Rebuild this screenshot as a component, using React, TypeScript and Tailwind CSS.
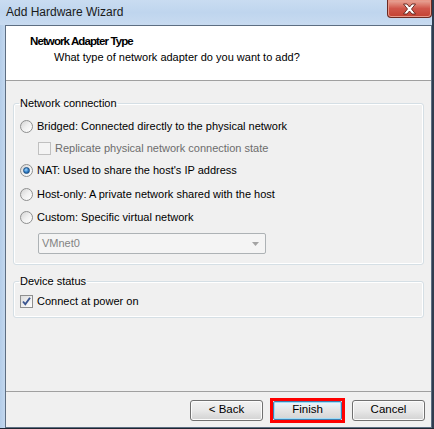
import React from "react";

const font = { fontFamily: '"Liberation Sans", Arial, sans-serif' };

function Radio({ checked }: { checked?: boolean }) {
  return (
    <span className="relative flex h-[13px] w-[13px] shrink-0 items-center justify-center rounded-full border border-[#8e8f8f] bg-gradient-to-br from-[#d4d4d4] via-[#f0f0f0] to-[#ffffff]">
      {checked && (
        <span className="h-[7px] w-[7px] rounded-full border border-[#1b4f84] bg-[radial-gradient(circle_at_40%_35%,#9fd6ff,#2c7bc4_55%,#1a4a85)]" />
      )}
    </span>
  );
}

function Check({ checked, disabled }: { checked?: boolean; disabled?: boolean }) {
  return (
    <span
      className={
        disabled
          ? "flex h-[13px] w-[13px] shrink-0 items-center justify-center border border-[#c0c0c0] bg-[#f4f4f4]"
          : "flex h-[13px] w-[13px] shrink-0 items-center justify-center border border-[#8e8f8f] bg-gradient-to-br from-[#dcdcdc] to-[#ffffff]"
      }
    >
      {checked && (
        <svg width="11" height="11" viewBox="0 0 11 11">
          <path d="M2 5.5 L4.3 8.3 L9 1.8" fill="none" stroke="#3a5590" strokeWidth="1.9" />
        </svg>
      )}
    </span>
  );
}

function Btn({ children, def }: { children: React.ReactNode; def?: boolean }) {
  return (
    <div
      className={
        def
          ? "flex h-[19px] w-[69px] items-center justify-center rounded-[2px] border border-[#3c7fb1] bg-gradient-to-b from-[#eaf6fd] via-[#e4e4e4] to-[#d4d4d4] text-[11.5px] text-black shadow-[inset_0_0_0_1px_#9edcf8]"
          : "flex h-[21px] w-[73px] items-center justify-center rounded-[3px] border border-[#707070] bg-gradient-to-b from-[#f2f2f2] via-[#e8e8e8] to-[#d2d2d2] text-[11.5px] text-black shadow-[inset_0_0_0_1px_#fcfcfc]"
      }
    >
      {children}
    </div>
  );
}

export default function App() {
  return (
    <div className="flex h-[429px] w-[434px] flex-col overflow-hidden bg-gradient-to-b from-[#bcd3ec] to-[#cfe0f3]" style={font}>
      {/* title bar */}
      <div className="flex h-[25px] shrink-0 items-start justify-between bg-gradient-to-b from-[#c9dcf1] via-[#bfd5ee] to-[#c8dbf0]">
        <div className="pl-[6px] pt-[5px] text-[12px] leading-[15px] text-[#1a1a1a]">Add Hardware Wizard</div>
        <div className="flex">
          <div className="flex h-[18px] w-[45px] items-center justify-center rounded-b-[4px] border border-t-0 border-[#6b2a22] bg-gradient-to-b from-[#e9a99b] via-[#d0564a] to-[#c34131] shadow-[inset_0_0_0_1px_#e89888]">
            <svg width="15" height="12" viewBox="0 0 15 12">
              <path
                d="M1.5 1 H5 L7.5 4 L10 1 H13.5 L9.5 6 L13.5 11 H10 L7.5 8 L5 11 H1.5 L5.5 6 Z"
                fill="#ffffff"
                stroke="#5e2019"
                strokeWidth="0.9"
                strokeLinejoin="round"
              />
            </svg>
          </div>
          <div className="h-[25px] w-[2px] bg-[#2f3d4f]" />
        </div>
      </div>

      {/* middle */}
      <div className="flex flex-1">
        <div className="w-[5px] bg-gradient-to-r from-[#b4cde9] to-[#c2d7ee]" />
        <div className="flex w-[427px] flex-col border border-[#5d6e82] bg-[#f0f0f0]">
          {/* header */}
          <div className="flex h-[55px] shrink-0 flex-col border-b border-[#a0a0a0] bg-white pl-[24px] pt-[8px]">
            <div className="text-[11.5px] font-bold leading-[15px] tracking-[-0.9px] text-black">Network Adapter Type</div>
            <div className="pl-[24px] pt-[1px] text-[11px] leading-[15px] text-black">What type of network adapter do you want to add?</div>
          </div>

          {/* body */}
          <div className="flex flex-1 flex-col px-[7px] text-[11px] leading-[15px] text-black">
            <fieldset className="mt-[15px] rounded-[3px] border border-[#d5dfe5] pb-[10px] pl-[6px] shadow-[inset_0_0_0_1px_#ffffff]">
              <legend className="ml-[-1px] px-[1px] leading-[14px]">Network connection</legend>
              <div className="mt-[8px] flex h-[16px] items-center gap-[4px]">
                <Radio />
                <span>Bridged: Connected directly to the physical network</span>
              </div>
              <div className="mt-[6px] flex h-[16px] items-center gap-[4px] pl-[18px] text-[#6d6d6d]">
                <Check disabled />
                <span>Replicate physical network connection state</span>
              </div>
              <div className="mt-[6px] flex h-[16px] items-center gap-[4px]">
                <Radio checked />
                <span>NAT: Used to share the host's IP address</span>
              </div>
              <div className="mt-[8px] flex h-[16px] items-center gap-[4px]">
                <Radio />
                <span>Host-only: A private network shared with the host</span>
              </div>
              <div className="mt-[7px] flex h-[16px] items-center gap-[4px]">
                <Radio />
                <span>Custom: Specific virtual network</span>
              </div>
              <div className="ml-[18px] mt-[8px] flex h-[21px] w-[228px] items-center justify-between rounded-[2px] border border-[#adb2b5] bg-[#f4f4f4] pl-[3px] pr-[6px] text-[#838383]">
                <span>VMnet0</span>
                <svg width="7" height="4" viewBox="0 0 7 4">
                  <path d="M0 0 H7 L3.5 4 Z" fill="#a3a3a3" />
                </svg>
              </div>
            </fieldset>

            <fieldset className="mt-[9px] rounded-[3px] border border-[#d5dfe5] pb-[8px] pl-[6px] shadow-[inset_0_0_0_1px_#ffffff]">
              <legend className="ml-[-1px] px-[1px] leading-[14px]">Device status</legend>
              <div className="mt-[5px] flex h-[16px] items-center gap-[4px]">
                <Check checked />
                <span>Connect at power on</span>
              </div>
            </fieldset>
          </div>

          {/* separator + buttons */}
          <div className="flex h-[36px] shrink-0 items-center justify-end gap-[7px] border-t border-[#a0a0a0] pr-[6px] pt-[1px]">
            <Btn>&lt; Back</Btn>
            <div className="flex h-[25px] w-[75px] items-center justify-center border-[3px] border-[#ff0000]">
              <Btn def>Finish</Btn>
            </div>
            <Btn>Cancel</Btn>
          </div>
        </div>
        <div className="w-[2px] bg-[#2f3d4f]" />
      </div>
      <div className="h-[1px] bg-[#1e2631]" />
    </div>
  );
}
